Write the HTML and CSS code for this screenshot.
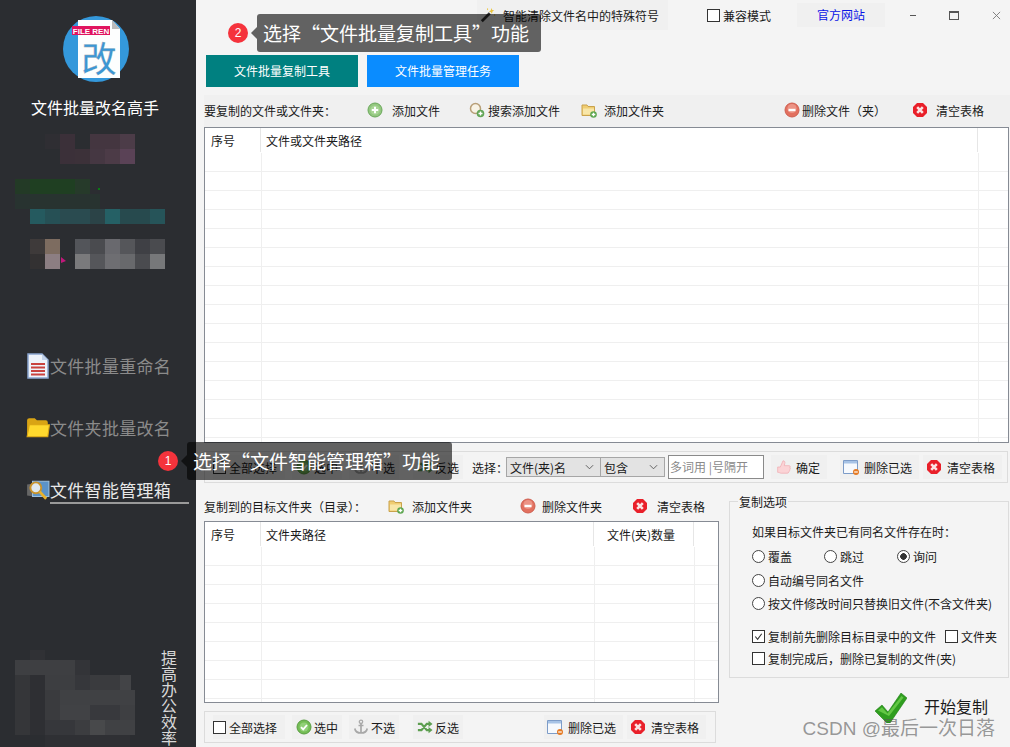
FILE: index.html
```html
<!DOCTYPE html>
<html lang="zh-CN">
<head>
<meta charset="utf-8">
<title>文件批量改名高手</title>
<link rel="stylesheet" href="styles.css">
</head>
<body>
<svg class="sprite" aria-hidden="true">
  <symbol id="i-plus" viewBox="0 0 16 16"><circle cx="8" cy="8" r="7" fill="#93c77f" stroke="#6aa85a"/><circle cx="8" cy="8" r="4.6" fill="#a9d696"/><path d="M8 4.8v6.4M4.8 8h6.4" stroke="#fff" stroke-width="2"/></symbol>
  <symbol id="i-del" viewBox="0 0 16 16"><circle cx="8" cy="8" r="7" fill="#e2705f" stroke="#cf5f50"/><circle cx="8" cy="6.5" r="4.6" fill="#ec9486"/><path d="M4.5 8h7" stroke="#fff" stroke-width="2.4"/></symbol>
  <symbol id="i-clear" viewBox="0 0 16 16"><path d="M5 1h6l4 4v6l-4 4H5l-4-4V5z" fill="#e9202a"/><path d="M5.2 5.2l5.6 5.6M10.800 5.200l-5.600 5.600" stroke="#fbe4e4" stroke-width="2.600"/></symbol>
  <symbol id="i-search" viewBox="0 0 16 16"><circle cx="6.500" cy="6.500" r="5" fill="#f8f3e6" stroke="#b89f78" stroke-width="1.500"/><path d="M10 10l3 3" stroke="#a58250" stroke-width="2"/><circle cx="11.500" cy="11.500" r="3.800" fill="#62a556"/><path d="M11.500 9.500v4M9.500 11.500h4" stroke="#fff" stroke-width="1.400"/></symbol>
  <symbol id="i-folder" viewBox="0 0 16 16"><path d="M1 3h5l1 1.500h6.500v9H1z" fill="#f0cd72" stroke="#c9a24c"/><path d="M2 6.500h11v6H2z" fill="#f8e6a8"/><circle cx="12.500" cy="12.500" r="3.300" fill="#5ca64f"/><path d="M12.500 10.700v3.600M10.700 12.500h3.600" stroke="#fff" stroke-width="1.300"/></symbol>
  <symbol id="i-ok" viewBox="0 0 16 16"><circle cx="8" cy="8" r="7" fill="#74bd55" stroke="#5a9d42"/><circle cx="8" cy="8" r="4.500" fill="#92d078"/><path d="M5 8.200l2.200 2.200L11 6" fill="none" stroke="#fff" stroke-width="1.800"/></symbol>
  <symbol id="i-anchor" viewBox="0 0 16 16"><circle cx="8" cy="2.800" r="1.700" fill="none" stroke="#aaa" stroke-width="1.300"/><path d="M8 4.500V14M5.500 6.500h5M1.800 9.500c.5 3 3 4.500 6.200 4.500s5.700-1.500 6.200-4.500" fill="none" stroke="#a8a8a8" stroke-width="1.700"/></symbol>
  <symbol id="i-shuffle" viewBox="0 0 18 16"><path d="M1 4.500h4l6 7h3M1 11.500h4l6-7h3" fill="none" stroke="#5d9e50" stroke-width="2.400"/><path d="M13 1l4.500 3.500L13 8zM13 8l4.500 3.500L13 15z" fill="#5d9e50"/></symbol>
  <symbol id="i-window" viewBox="0 0 16 16"><path d="M.5 1.500h14v13H.5z" fill="#f6f9fd" stroke="#7d9cc8"/><path d="M1 2h13v2.500H1z" fill="#a7c3e6"/><circle cx="13" cy="13" r="3" fill="#e57a24"/><path d="M11.200 13h3.600" stroke="#fff" stroke-width="1.200"/></symbol>
  <symbol id="i-thumb" viewBox="0 0 18 18"><path d="M3 9h3l3-7c1.800 0 2.500 1.300 2 3l-.6 2.500H16c1 0 1.400 1.400.8 2.200.6.800.4 2-.4 2.500.3 1-.2 2-1 2.300 0 1-.8 1.500-1.600 1.500H7c-1.500 0-2-1-4-1z" fill="#fbd3d6" stroke="#f0a9ae" stroke-width=".8"/></symbol>
  <symbol id="i-wand" viewBox="0 0 18 18"><path d="M2 16L11 7" stroke="#333" stroke-width="3"/><path d="M13 1l.8 2.400L16 4l-2 1.200L13.500 8l-1.300-2.300L10 5l2-1z" fill="#e9c33a"/><path d="M16.500 8v2M8.500 1.500v2" stroke="#e9c33a"/></symbol>
  <symbol id="i-tick" viewBox="0 0 32 30"><path d="M0 18l7-6 6 7L26 0l6 5-17 25h-3z" fill="#2f9e1f" stroke="#1f7f14" stroke-width=".6"/><path d="M3 17.500l4-3.300 5.500 6.300L26.500 3l2 1.500L14 23z" fill="#63c745"/></symbol>
  <symbol id="i-doc" viewBox="0 0 22 26"><path d="M1 1h14l6 6v18H1z" fill="#eef3fb" stroke="#8ba5cf" stroke-width="1.500"/><path d="M15 1v6h6z" fill="#c4d3ea"/><path d="M4 11h14M4 14.500h14M4 18h14M4 21.500h14" stroke="#c9423f" stroke-width="2"/></symbol>
  <symbol id="i-navfolder" viewBox="0 0 22 20"><path d="M1 3q0-2 2-2h5l2 2h8q2 0 2 2v13H1z" fill="#d9a414"/><path d="M1 18L3 7h18.500L20 18z" fill="#ffd92e" stroke="#d9a414"/></symbol>
  <symbol id="i-manager" viewBox="0 0 22 20"><path d="M1 5l6-1v12l-6-1z" fill="#666"/><path d="M6 2h15v14H6z" fill="#5b93c9" stroke="#9cc0de"/><circle cx="9" cy="8" r="5" fill="#dfe8ee" stroke="#c9932b" stroke-width="1.800"/><path d="M12.500 11.500l6 6.500" stroke="#e8b22e" stroke-width="2.600"/></symbol>
</svg>

<div class="app">
  <aside class="sidebar">
    <svg class="logo" viewBox="0 0 66 66" role="img" aria-label="logo">
      <circle cx="33" cy="33" r="33" fill="#3498db"/>
      <path d="M15 4h34l8 9v49H15z" fill="#fdfefe"/>
      <path d="M49 4l8 9h-8z" fill="#bbb"/>
      <text x="36" y="56" class="logo-char" text-anchor="middle">改</text>
      <rect x="9" y="10" width="38" height="9" fill="#e0145f"/>
      <text x="28" y="18" class="logo-label" text-anchor="middle">FILE REN</text>
    </svg>
    <h1 class="app-title">文件批量改名高手</h1>
    <svg class="mosaic-top" viewBox="0 135 196 135" aria-hidden="true">
      <g shape-rendering="crispEdges">
        <rect x="45" y="135" width="15" height="15" fill="#2f2e33"/>
        <rect x="60" y="135" width="15" height="30" fill="#3b3039"/>
        <rect x="75" y="150" width="15" height="15" fill="#3c3139"/>
        <rect x="90" y="135" width="30" height="15" fill="#443640"/>
        <rect x="120" y="135" width="15" height="15" fill="#4c3c48"/>
        <rect x="90" y="150" width="15" height="15" fill="#453742"/>
        <rect x="105" y="150" width="15" height="15" fill="#4c3b47"/>
        <rect x="120" y="150" width="15" height="15" fill="#5a4256"/>
        <rect x="15" y="180" width="15" height="15" fill="#233a26"/>
        <rect x="30" y="180" width="45" height="15" fill="#1f3f22"/>
        <rect x="75" y="180" width="15" height="15" fill="#263a2a"/>
        <rect x="15" y="195" width="85" height="15" fill="#283330"/>
        <rect x="98" y="189" width="2" height="2" fill="#0a7a14"/>
        <rect x="30" y="210" width="15" height="15" fill="#255a5f"/>
        <rect x="45" y="210" width="15" height="15" fill="#265055"/>
        <rect x="60" y="210" width="30" height="15" fill="#2a4b50"/>
        <rect x="90" y="210" width="15" height="15" fill="#2b4347"/>
        <rect x="105" y="210" width="15" height="15" fill="#256065"/>
        <rect x="120" y="210" width="30" height="15" fill="#274a4e"/>
        <rect x="150" y="210" width="15" height="15" fill="#265459"/>
        <rect x="30" y="240" width="15" height="15" fill="#3e3a3a"/>
        <rect x="45" y="240" width="15" height="15" fill="#7d6c60"/>
        <rect x="75" y="240" width="15" height="15" fill="#53555a"/>
        <rect x="90" y="240" width="15" height="15" fill="#4a4b4f"/>
        <rect x="105" y="240" width="15" height="15" fill="#69696e"/>
        <rect x="120" y="240" width="15" height="15" fill="#55565a"/>
        <rect x="135" y="240" width="15" height="15" fill="#3f4045"/>
        <rect x="150" y="240" width="15" height="15" fill="#4a4b4f"/>
        <rect x="30" y="255" width="15" height="15" fill="#333132"/>
        <rect x="45" y="255" width="15" height="15" fill="#8c7e82"/>
        <rect x="75" y="255" width="15" height="15" fill="#7a7a7c"/>
        <rect x="90" y="255" width="15" height="15" fill="#55565a"/>
        <rect x="105" y="255" width="15" height="15" fill="#6e6e72"/>
        <rect x="120" y="255" width="15" height="15" fill="#68696c"/>
        <rect x="135" y="255" width="15" height="15" fill="#4a4b4f"/>
        <rect x="150" y="255" width="15" height="15" fill="#77787a"/>
      </g>
      <path d="M61 258l5 4-5 2z" fill="#c0187a"/>
    </svg>
    <nav class="nav">
      <a class="nav-item"><svg class="nav-ico"><use href="#i-doc"/></svg><span class="nav-text">文件批量重命名</span></a>
      <a class="nav-item"><svg class="nav-ico"><use href="#i-navfolder"/></svg><span class="nav-text">文件夹批量改名</span></a>
      <a class="nav-item is-active"><svg class="nav-ico"><use href="#i-manager"/></svg><span class="nav-text">文件智能管理箱</span></a>
    </nav>
    <div class="side-foot">
      <svg class="mosaic-foot" viewBox="0 650 150 97" aria-hidden="true">
        <g shape-rendering="crispEdges">
          <rect x="30" y="650" width="15" height="10" fill="#303135"/>
          <rect x="15" y="660" width="60" height="15" fill="#3e3f42"/>
          <rect x="75" y="660" width="15" height="15" fill="#333438"/>
          <rect x="15" y="675" width="15" height="60" fill="#353639"/>
          <rect x="30" y="675" width="15" height="60" fill="#2e2f33"/>
          <rect x="45" y="675" width="30" height="15" fill="#3d3e41"/>
          <rect x="75" y="675" width="15" height="15" fill="#36373b"/>
          <rect x="90" y="675" width="30" height="15" fill="#3a3b3e"/>
          <rect x="120" y="675" width="11" height="15" fill="#434447"/>
          <rect x="45" y="690" width="15" height="30" fill="#3a3b3e"/>
          <rect x="60" y="690" width="75" height="15" fill="#404144"/>
          <rect x="60" y="705" width="30" height="15" fill="#414245"/>
          <rect x="90" y="705" width="30" height="15" fill="#38393d"/>
          <rect x="120" y="705" width="15" height="15" fill="#3e3f42"/>
          <rect x="45" y="720" width="30" height="15" fill="#36373b"/>
          <rect x="75" y="720" width="15" height="15" fill="#3c3d40"/>
          <rect x="90" y="720" width="15" height="15" fill="#48494b"/>
          <rect x="105" y="720" width="30" height="15" fill="#404144"/>
          <rect x="45" y="735" width="85" height="12" fill="#2f3034"/>
        </g>
      </svg>
      <div class="slogan">提高办公效率</div>
    </div>
  </aside>

  <main class="main">
    <header class="topbar">
      <button class="top-btn wand"><svg class="ico"><use href="#i-wand"/></svg><span>智能清除文件名中的特殊符号</span></button>
      <label class="top-check"><span class="check"></span>兼容模式</label>
      <a class="site-link">官方网站</a>
      <div class="win-controls">
        <span class="win-min"></span>
        <span class="win-max"></span>
        <svg class="win-close" viewBox="0 0 10 10"><path d="M1 1l8 8M9 1l-8 8" stroke="#777" stroke-width="1" fill="none"/></svg>
      </div>
    </header>

    <div class="tabs">
      <button class="tab tab-teal">文件批量复制工具</button>
      <button class="tab tab-blue">文件批量管理任务</button>
    </div>

    <section class="tool-strip source-tools">
      <span class="strip-label">要复制的文件或文件夹：</span>
      <span class="tool gap-9"><svg class="ico"><use href="#i-plus"/></svg>添加文件</span>
      <span class="tool gap-3"><svg class="ico"><use href="#i-search"/></svg>搜索添加文件</span>
      <span class="tool gap-7"><svg class="ico"><use href="#i-folder"/></svg>添加文件夹</span>
      <span class="tool gap-2"><svg class="ico"><use href="#i-del"/></svg>删除文件（夹）</span>
      <span class="tool gap-8"><svg class="ico"><use href="#i-clear"/></svg>清空表格</span>
    </section>

    <div class="table source-table">
      <div class="thead">
        <span class="th th-no">序号</span>
        <span class="th th-grow">文件或文件夹路径</span>
        <span class="th th-end"></span>
      </div>
      <div class="tbody">
        <div class="col col-no"></div>
        <div class="col col-grow"></div>
        <div class="col col-end"></div>
      </div>
    </div>

    <div class="action-bar select-bar">
      <button class="btn"><span class="check"></span>全部选择</button>
      <button class="btn ml-7 w-50"><svg class="ico"><use href="#i-ok"/></svg>选中</button>
      <button class="btn ml-7 w-50"><svg class="ico"><use href="#i-anchor"/></svg>不选</button>
      <button class="btn ml-14 w-50"><svg class="ico"><use href="#i-shuffle"/></svg>反选</button>
      <span class="bar-label">选择：</span>
      <span class="select sel-field">文件(夹)名<svg class="chev" viewBox="0 0 10 6"><path d="M1 1l4 4 4-4" fill="none" stroke="#555"/></svg></span>
      <span class="select sel-op">包含<svg class="chev" viewBox="0 0 10 6"><path d="M1 1l4 4 4-4" fill="none" stroke="#555"/></svg></span>
      <span class="input">多词用 |号隔开</span>
      <button class="btn ml-7 w-56"><svg class="ico"><use href="#i-thumb"/></svg>确定</button>
      <button class="btn ml-13 w-79"><svg class="ico"><use href="#i-window"/></svg>删除已选</button>
      <button class="btn ml-4 w-79"><svg class="ico"><use href="#i-clear"/></svg>清空表格</button>
    </div>

    <div class="lower">
      <div class="lower-left">
        <section class="tool-strip target-tools">
          <span class="strip-label">复制到的目标文件夹（目录）：</span>
          <span class="tool gap-8"><svg class="ico"><use href="#i-folder"/></svg>添加文件夹</span>
          <span class="tool gap-6"><svg class="ico"><use href="#i-del"/></svg>删除文件夹</span>
          <span class="tool gap-9"><svg class="ico"><use href="#i-clear"/></svg>清空表格</span>
        </section>
        <div class="table target-table">
          <div class="thead">
            <span class="th th-no">序号</span>
            <span class="th th-path">文件夹路径</span>
            <span class="th th-count">文件(夹)数量</span>
            <span class="th th-rest"></span>
          </div>
          <div class="tbody">
            <div class="col col-no"></div>
            <div class="col col-path"></div>
            <div class="col col-count"></div>
            <div class="col col-rest"></div>
          </div>
        </div>
        <div class="action-bar bottom-bar">
          <button class="btn"><span class="check"></span>全部选择</button>
          <button class="btn ml-7 w-50"><svg class="ico"><use href="#i-ok"/></svg>选中</button>
          <button class="btn ml-7 w-50"><svg class="ico"><use href="#i-anchor"/></svg>不选</button>
          <button class="btn ml-14 w-50"><svg class="ico"><use href="#i-shuffle"/></svg>反选</button>
          <button class="btn ml-81 w-79"><svg class="ico"><use href="#i-window"/></svg>删除已选</button>
          <button class="btn ml-4 w-79"><svg class="ico"><use href="#i-clear"/></svg>清空表格</button>
        </div>
      </div>

      <div class="lower-right">
        <fieldset class="options">
          <legend>复制选项</legend>
          <p class="opt-title">如果目标文件夹已有同名文件存在时：</p>
          <div class="opt-row radios">
            <label class="opt opt-a"><span class="radio"></span>覆盖</label>
            <label class="opt opt-b"><span class="radio"></span>跳过</label>
            <label class="opt"><span class="radio is-on"></span>询问</label>
          </div>
          <div class="opt-row"><label class="opt"><span class="radio"></span>自动编号同名文件</label></div>
          <div class="opt-row"><label class="opt"><span class="radio"></span>按文件修改时间只替换旧文件(不含文件夹)</label></div>
          <div class="opt-row checks">
            <label class="opt opt-c"><span class="check is-on"><svg viewBox="0 0 12 12"><path d="M2.500 6l2.500 3 4.500-6" fill="none" stroke="#333" stroke-width="1.200"/></svg></span>复制前先删除目标目录中的文件</label>
            <label class="opt"><span class="check"></span>文件夹</label>
          </div>
          <div class="opt-row"><label class="opt"><span class="check"></span>复制完成后，删除已复制的文件(夹)</label></div>
        </fieldset>
        <button class="start"><svg class="tick"><use href="#i-tick"/></svg><span class="start-label">开始复制</span></button>
      </div>
    </div>
  </main>

  <div class="tip tip-two"><span class="badge">2</span><span class="tip-box">选择“文件批量复制工具”功能</span></div>
  <div class="tip tip-one"><span class="badge">1</span><span class="tip-box">选择“文件智能管理箱”功能</span></div>
  <div class="watermark">CSDN @最后一次日落</div>
</div>
</body>
</html>
```

FILE: styles.css
```css
* { box-sizing: border-box; }
html, body { margin: 0; padding: 0; height: 100%; overflow: hidden; }
body {
  font-family: "Noto Sans CJK SC", "Liberation Sans", sans-serif;
  font-size: 12px;
  color: #1a1a1a;
}
button { font: inherit; color: inherit; border: 0; padding: 0; background: none; }
.sprite { position: absolute; width: 0; height: 0; }

.app {
  position: relative;
  display: grid;
  grid-template-columns: 196px 1fr;
  width: 1010px;
  height: 747px;
  overflow: hidden;
  background: #f4f4f4;
}

/* sidebar */
.sidebar {
  display: flex;
  flex-direction: column;
  height: 747px;
  background: #2b2d31;
  color: #fff;
}
.logo { display: block; width: 66px; height: 66px; margin: 16px 0 0 63px; }
.logo-label { font: 700 8px "Liberation Sans", sans-serif; fill: #fff; }
.logo-char { font: 400 35px "Noto Sans CJK SC", sans-serif; fill: #3b97d6; stroke: #9aa3a8; stroke-width: .3; }
.app-title {
  margin: 14px 0 0;
  height: 22px;
  padding-right: 6px;
  font-size: 16px;
  line-height: 22px;
  font-weight: 400;
  text-align: center;
  color: #fff;
}
.mosaic-top { display: block; width: 196px; height: 135px; margin-top: 16px; }
.nav { display: flex; flex-direction: column; margin-top: 79px; padding-left: 26px; }
.nav-item { display: flex; align-items: center; height: 36px; margin-bottom: 26px; color: #8b8b8b; }
.nav-ico { width: 24px; height: 26px; flex: none; }
.nav-text { font-size: 17px; letter-spacing: .3px; line-height: 36px; white-space: nowrap; }
.is-active { color: #e8e8e8; }
.is-active .nav-text {
  align-self: flex-start;
  width: 139px;
  height: 24px;
  margin-top: 8px;
  line-height: 20px;
  border-bottom: 2px solid #9a9a9a;
}
.side-foot { display: flex; margin-top: auto; height: 97px; }
.mosaic-foot { display: block; width: 150px; height: 97px; flex: none; }
.slogan {
  writing-mode: vertical-rl;
  margin-left: 11px;
  font-size: 16px;
  line-height: 16px;
  color: #d8d8d8;
}

/* main */
.main { display: flex; flex-direction: column; padding-left: 8px; min-width: 0; }
.topbar { display: flex; align-items: flex-start; height: 30px; margin-left: -8px; padding-left: 281px; }
.top-btn {
  display: flex;
  align-items: center;
  gap: 7px;
  width: 191px;
  height: 30px;
  padding-left: 3px;
  background: #f0f0f0;
  white-space: nowrap;
}
.top-check { display: flex; align-items: center; gap: 3px; height: 30px; margin-left: 39px; white-space: nowrap; }
.site-link {
  width: 88px;
  height: 24px;
  margin: 3px 0 0 26px;
  line-height: 24px;
  text-align: center;
  color: #0a14e6;
  background: #f0f0f0;
}
.win-controls { display: flex; align-items: center; height: 30px; margin-left: 25px; }
.win-min { width: 6px; height: 1px; background: #555; }
.win-max { width: 10px; height: 9px; margin-left: 33px; border: 1px solid #555; border-top-width: 2px; }
.win-close { width: 9px; height: 9px; margin-left: 33px; }
.ico { width: 16px; height: 16px; flex: none; }

.tabs { display: flex; gap: 9px; margin: 25px 0 0 2px; }
.tab { width: 152px; height: 32px; color: #fff; line-height: 32px; text-align: center; }
.tab-teal { background: #008080; }
.tab-blue { background: #0a8cff; }

.tool-strip { display: grid; align-items: center; background: #f0f0f0; white-space: nowrap; }
.source-tools { grid-template-columns: 163px 102px 112px 203px 128px auto; height: 32px; margin-top: 8px; padding-bottom: 2px; }
.target-tools { grid-template-columns: 184px 132px 112px auto; height: 30px; background: transparent; }
.tool { display: flex; align-items: center; }
.gap-2 { gap: 2px; }
.gap-3 { gap: 3px; }
.gap-6 { gap: 6px; }
.gap-7 { gap: 7px; }
.gap-8 { gap: 8px; }
.gap-9 { gap: 9px; }

.table { display: flex; flex-direction: column; background: #fff; border: 1px solid #868b94; }
.source-table { width: 805px; height: 316px; }
.target-table { width: 515px; height: 182px; }
.thead { display: flex; height: 25px; flex: none; }
.th { height: 24px; line-height: 26px; padding-left: 6px; border-right: 1px solid #e6e6e6; white-space: nowrap; }
.th-no { width: 56px; }
.th-grow { width: 717px; padding-left: 5px; }
.th-end { border-right: 0; flex: 1; }
.th-path { width: 333px; padding-left: 5px; }
.th-count { width: 100px; padding-left: 13px; }
.th-rest { border-right: 0; flex: 1; }
.tbody {
  display: flex;
  flex: 1;
  min-height: 0;
  background: repeating-linear-gradient(to bottom, #fff 0, #fff 18px, #efefef 18px, #efefef 19px);
}
.col { border-right: 1px solid #efefef; }
.col-no { width: 57px; }
.col-grow { width: 717px; }
.col-path { width: 333px; }
.col-count { width: 100px; }
.col-end, .col-rest { flex: 1; border-right: 0; }

.action-bar { display: flex; align-items: center; border: 1px solid #dcdcdc; padding-left: 8px; white-space: nowrap; }
.select-bar { width: 804px; height: 32px; margin-top: 8px; }
.bottom-bar { width: 512px; height: 32px; margin-top: 8px; }
.btn { display: flex; align-items: center; gap: 3px; width: 72px; height: 24px; background: #f0f0f0; white-space: nowrap; }
.w-50 { width: 50px; padding-left: 4px; gap: 2px; }
.w-56 { width: 56px; padding-left: 4px; gap: 5px; }
.w-79 { width: 79px; padding-left: 3px; gap: 5px; }
.ml-4 { margin-left: 4px; }
.ml-7 { margin-left: 7px; }
.ml-13 { margin-left: 13px; }
.ml-14 { margin-left: 14px; }
.ml-81 { margin-left: 81px; }
.bar-label { margin-left: 9px; width: 34px; }
.select {
  display: flex;
  align-items: center;
  justify-content: space-between;
  height: 20px;
  padding: 0 6px 0 3px;
  background: #e3e3e3;
  border: 1px solid #a6a6a6;
}
.sel-field { width: 95px; }
.sel-op { width: 65px; margin-left: -1px; }
.chev { width: 9px; height: 6px; }
.input {
  width: 96px;
  height: 24px;
  margin-left: 3px;
  padding-left: 1px;
  line-height: 22px;
  color: #8a8a8a;
  background: #fff;
  border: 1px solid #8a8a8a;
}
.check {
  display: inline-block;
  width: 13px;
  height: 13px;
  flex: none;
  border: 1px solid #333;
  background: #fff;
}
.check svg { display: block; width: 11px; height: 11px; }
.radio {
  display: inline-block;
  width: 13px;
  height: 13px;
  flex: none;
  border: 1px solid #444;
  border-radius: 50%;
  background: #fff;
}
.radio.is-on { background: radial-gradient(circle, #333 0 3px, #fff 3.6px); }

.lower { display: flex; margin-top: 8px; }
.lower-left { width: 515px; flex: none; }
.lower-right { width: 280px; margin-left: 10px; }
.options {
  position: relative;
  display: block;
  width: 280px;
  height: 177px;
  margin: 10px 0 0;
  padding: 21px 0 0 22px;
  border: 1px solid #dcdcdc;
  min-width: 0;
}
.options legend {
  position: absolute;
  top: -9px;
  left: 8px;
  padding: 0 1px;
  line-height: 18px;
  background: #f4f4f4;
}
.opt-title { margin: 0; height: 18px; line-height: 18px; }
.opt-row { display: flex; align-items: center; height: 23px; white-space: nowrap; }
.radios { margin-top: 2px; height: 26px; }
.checks { margin-top: 10px; height: 22px; }
.opt { display: flex; align-items: center; gap: 3px; }
.opt-a { width: 72px; }
.opt-b { width: 73px; }
.opt-c { width: 193px; }
.start { display: flex; align-items: center; gap: 17px; height: 32px; margin: 14px 0 0 146px; font-size: 16px; }
.start-label { padding-bottom: 4px; }
.tick { width: 32px; height: 30px; flex: none; }

/* overlays */
.tip { position: absolute; display: flex; align-items: center; }
.tip-one { left: 158px; top: 442px; gap: 9px; }
.tip-two { left: 228px; top: 14px; gap: 9px; }
.badge {
  width: 20px;
  height: 20px;
  border-radius: 50%;
  background: #f5333c;
  color: #fff;
  font: 12px/20px "Liberation Sans", sans-serif;
  text-align: center;
}
.tip-box {
  position: relative;
  display: block;
  height: 38px;
  padding: 0 12px 0 6px;
  font-size: 19px;
  line-height: 37px;
  color: #fff;
  white-space: nowrap;
  background: rgba(0, 0, 0, .6);
  border-radius: 3px;
}
.tip-box::before {
  content: "";
  position: absolute;
  left: -6px;
  top: 13px;
  border: 6px solid transparent;
  border-left: 0;
  border-right-color: rgba(0, 0, 0, .6);
}
.watermark {
  position: absolute;
  right: 15px;
  bottom: 5px;
  font-family: "Liberation Sans", "Noto Sans CJK SC", sans-serif;
  font-size: 19px;
  line-height: 26px;
  color: rgba(90, 90, 90, .62);
  white-space: nowrap;
}
```
